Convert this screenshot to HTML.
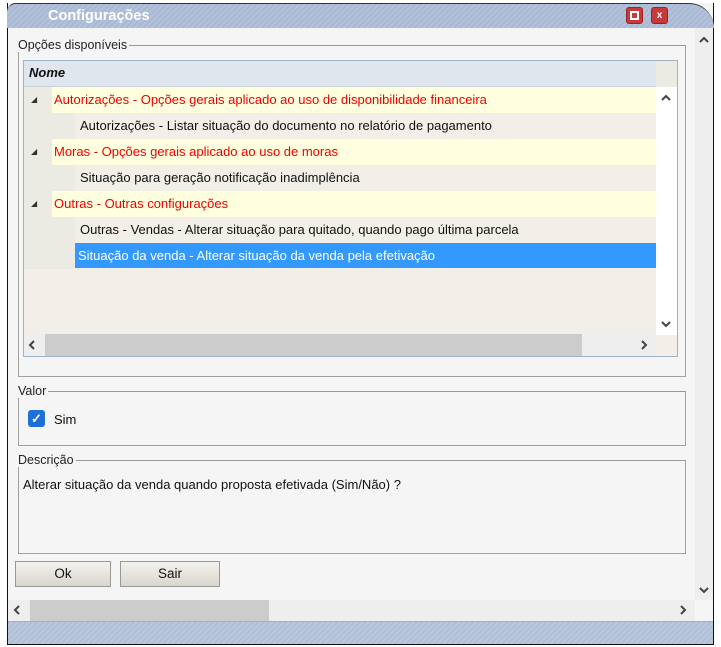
<!DOCTYPE html>
<html><head><meta charset="utf-8"><style>
*{box-sizing:border-box;margin:0;padding:0}
body{width:721px;height:647px;background:#fff;position:relative;overflow:hidden;font-family:"Liberation Sans",sans-serif;font-size:13px;color:#111}
.a{position:absolute}
.win{left:7px;top:3px;width:707px;height:642px;background:#f5f5f5;border:1px solid #111;border-top:none;border-bottom:3px solid #111}
.title{left:7px;top:3px;width:707px;height:25px;background:repeating-linear-gradient(135deg,#a9b9d4 0 2px,#b3c2db 2px 4px);border-radius:14px 40px 0 0;border-top:1px solid #333}
.tbtn{width:17px;height:17px;background:#c83a3a;border:1px solid #a02020;border-radius:3px;color:#fff;font-size:10px;font-weight:bold;text-align:center;line-height:15px}
fieldset{position:absolute;border:1px solid #a0a0a0;border-top-color:#999}
legend{font-size:12.5px;color:#222;padding:0 2px;margin-left:-3px}
.row{position:absolute;left:0;width:632px;height:26px;line-height:25px}
.ind{position:absolute;left:0;top:0;width:51px;height:26px;background:#ecebe3}
.red{color:#e00;background:#ffffe0}
.red span{position:absolute;left:30px}
.sub{background:#f1efe7}
.sub span{position:absolute;left:56px}
.btn{top:561px;height:26px;background:linear-gradient(#f4f2ee,#dad6ce);border:1px solid #999;text-align:center;line-height:24px;font-size:13.5px}
svg.c{position:absolute;width:10px;height:10px}
svg.c path{fill:none;stroke:#444;stroke-width:2}
</style></head><body>
<div class="a win"></div>
<div class="a title"></div>
<div class="a" style="left:48px;top:8px;color:#fff;font-weight:bold;font-size:14.5px">Configurações</div>
<div class="a tbtn" style="left:626px;top:7px"><div style="width:9px;height:9px;border:2px solid #fff;margin:3px auto"></div></div>
<div class="a tbtn" style="left:651px;top:7px">x</div>
<div class="a" style="left:695px;top:28px;width:18px;height:572px;background:#eee"></div>
<svg class="c" style="left:699px;top:35px"><path d="M1 7L5 3L9 7"/></svg>
<svg class="c" style="left:699px;top:585px"><path d="M1 3L5 7L9 3"/></svg>

<fieldset style="left:18px;top:38px;width:668px;height:339px"><legend>Opções disponíveis</legend></fieldset>
<div class="a" style="left:23px;top:60px;width:655px;height:297px;border:1px solid #9fb3c8;background:#f1efe7">
 <div class="a" style="left:0;top:0;width:632px;height:26px;background:#dfe6ee;border-bottom:1px solid #c8d0d8;font-weight:bold;font-style:italic;padding:4px 5px">Nome</div>
 <div class="a" style="left:632px;top:0;width:21px;height:26px;background:#ecebe3"></div>
 <div class="row red" style="top:26px"><div class="ind" style="width:28px;background:#ecebe3;font-size:8px;color:#333;padding-left:7px">&#9698;</div><span>Autorizações - Opções gerais aplicado ao uso de disponibilidade financeira</span></div>
 <div class="row sub" style="top:52px"><div class="ind"></div><span>Autorizações - Listar situação do documento no relatório de pagamento</span></div>
 <div class="row red" style="top:78px"><div class="ind" style="width:28px;background:#ecebe3;font-size:8px;color:#333;padding-left:7px">&#9698;</div><span>Moras - Opções gerais aplicado ao uso de moras</span></div>
 <div class="row sub" style="top:104px"><div class="ind"></div><span>Situação para geração notificação inadimplência</span></div>
 <div class="row red" style="top:130px"><div class="ind" style="width:28px;background:#ecebe3;font-size:8px;color:#333;padding-left:7px">&#9698;</div><span>Outras - Outras configurações</span></div>
 <div class="row sub" style="top:156px"><div class="ind"></div><span>Outras - Vendas - Alterar situação para quitado, quando pago última parcela</span></div>
 <div class="row sub" style="top:182px"><div class="ind"></div><span style="left:51px;right:0;background:#3399ff;color:#fff;padding-left:3px">Situação da venda - Alterar situação da venda pela efetivação</span></div>
 <div class="a" style="left:632px;top:26px;width:21px;height:248px;background:#fff"></div>
 <svg class="c" style="left:637px;top:32px"><path d="M1 7L5 3L9 7"/></svg>
 <svg class="c" style="left:637px;top:258px"><path d="M1 3L5 7L9 3"/></svg>
 <div class="a" style="left:0;top:273px;width:632px;height:22px;background:#eee"></div>
 <div class="a" style="left:21px;top:273px;width:537px;height:22px;background:#ccc"></div>
 <svg class="c" style="left:3px;top:279px"><path d="M7 1L3 5L7 9"/></svg>
 <svg class="c" style="left:615px;top:279px"><path d="M3 1L7 5L3 9"/></svg>
</div>

<fieldset style="left:18px;top:384px;width:668px;height:62px"><legend>Valor</legend></fieldset>
<div class="a" style="left:28px;top:410px;width:17px;height:17px;background:#1e6fd9;border-radius:3px;color:#fff;font-size:13px;text-align:center;line-height:17px;font-weight:bold">&#10003;</div>
<div class="a" style="left:54px;top:412px">Sim</div>

<fieldset style="left:18px;top:453px;width:668px;height:101px"><legend>Descrição</legend></fieldset>
<div class="a" style="left:23px;top:477px">Alterar situação da venda quando proposta efetivada (Sim/Não) ?</div>

<div class="a btn" style="left:15px;width:96px">Ok</div>
<div class="a btn" style="left:120px;width:100px">Sair</div>

<div class="a" style="left:8px;top:600px;width:687px;height:21px;background:#eee"></div>
<div class="a" style="left:30px;top:600px;width:239px;height:21px;background:#ccc"></div>
<svg class="c" style="left:12px;top:605px"><path d="M7 1L3 5L7 9"/></svg>
<svg class="c" style="left:678px;top:605px"><path d="M3 1L7 5L3 9"/></svg>
<div class="a" style="left:8px;top:621px;width:705px;height:23px;background:repeating-linear-gradient(135deg,#b0bfd6 0 2px,#bac8dd 2px 4px);border-top:1px solid #9fb0c8"></div>
</body></html>
